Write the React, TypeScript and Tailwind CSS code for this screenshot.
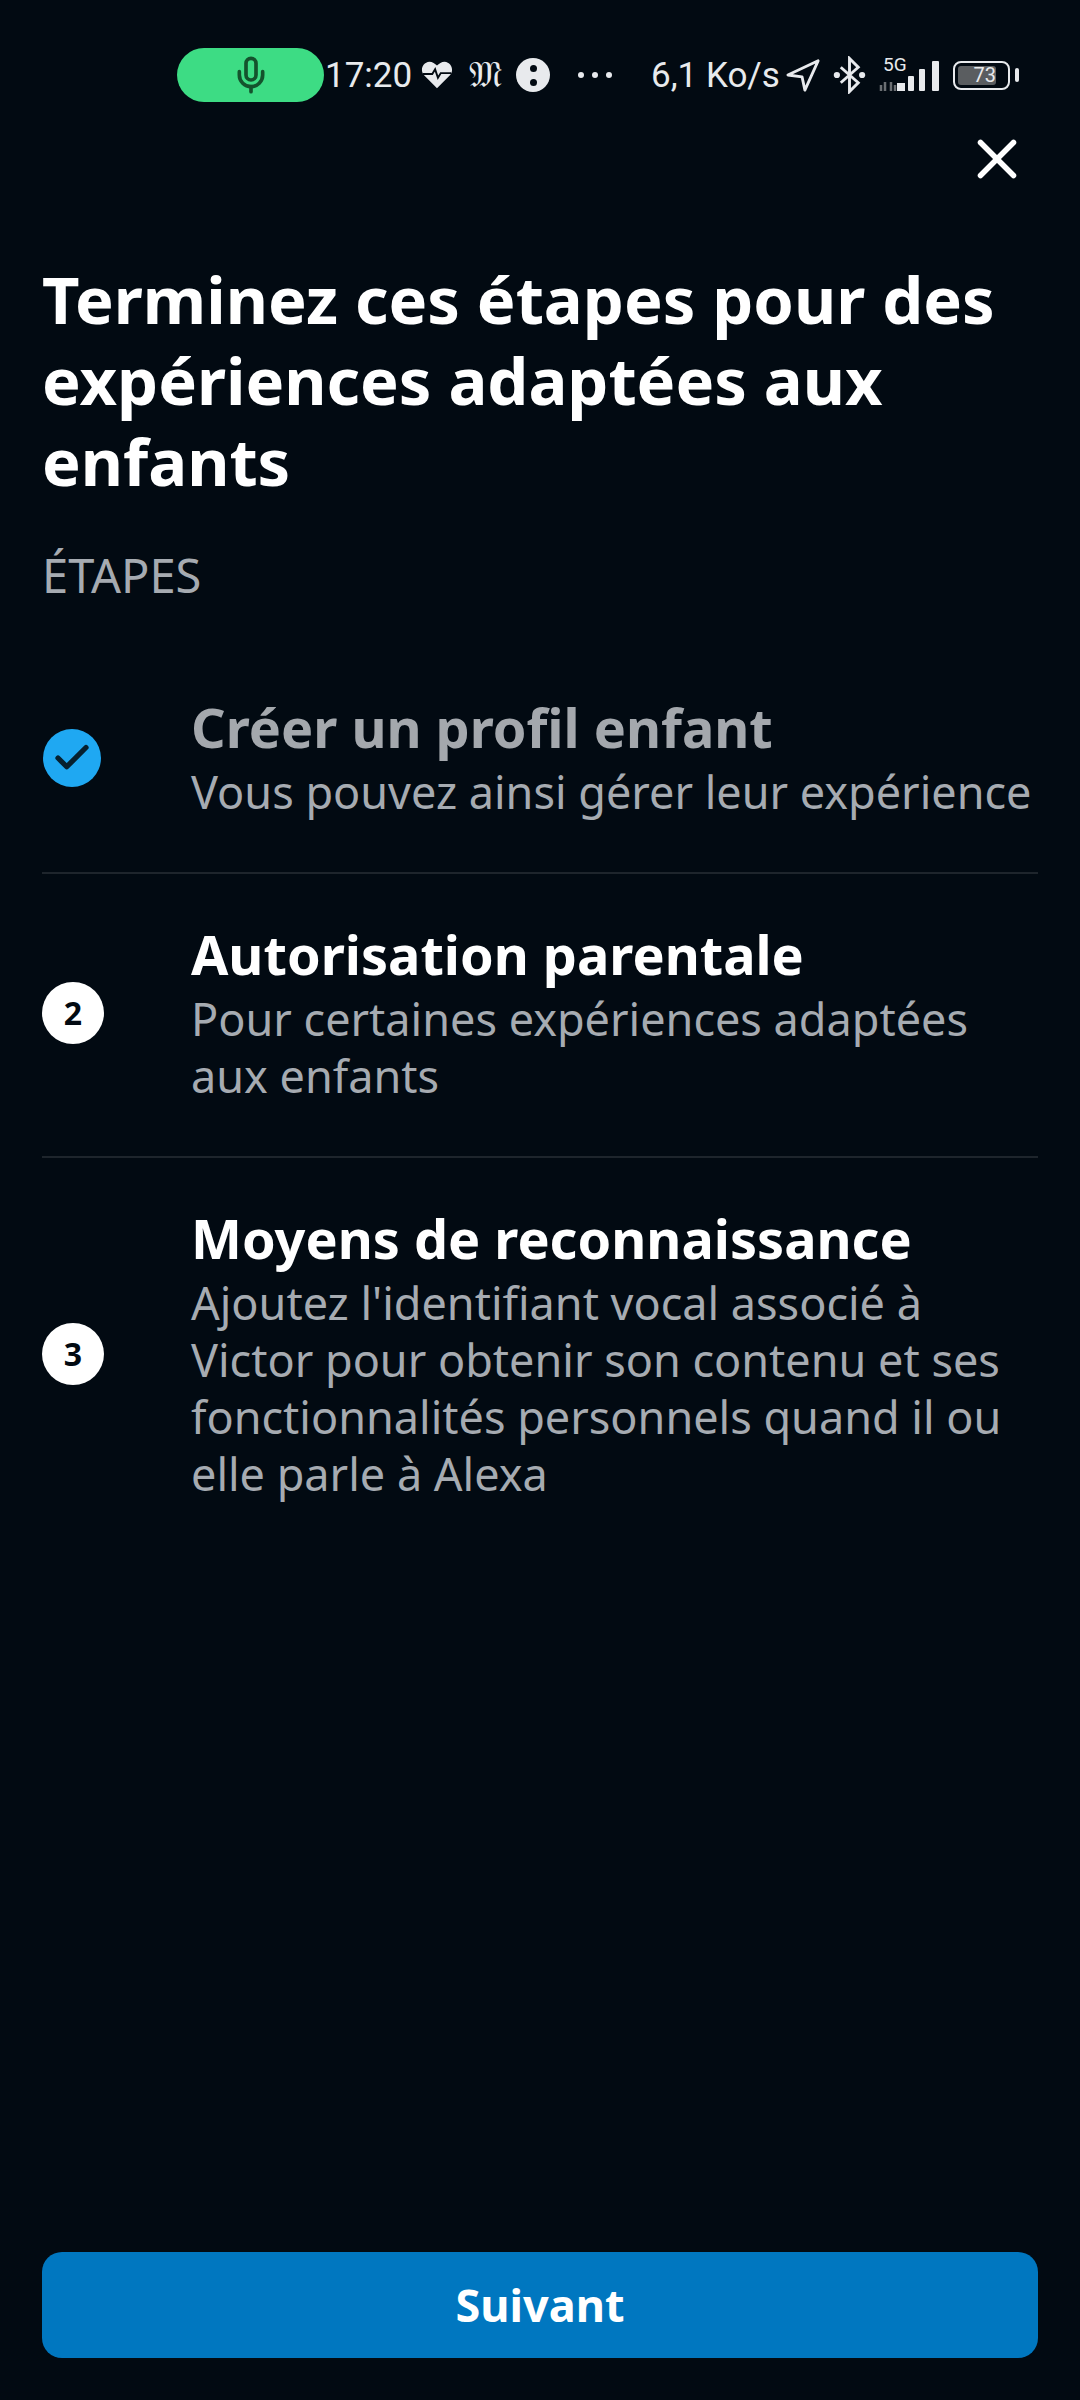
import { Check, Mic, X } from "lucide-react";

const font = "font-['Noto_Sans',sans-serif]";

function StatusBar() {
  return (
    <div className="flex h-[104px] items-center pl-[177px] pt-[46px] text-[#e8eaed] font-['Roboto',sans-serif]">
      <div className="flex h-[54px] w-[147px] items-center justify-center rounded-[27px] bg-[#3ddc84]">
        <Mic className="h-[40px] w-[40px] text-[#14532d]" strokeWidth={2.2} />
      </div>
      <span className="ml-[1px] w-[86px] text-[35px] leading-none">17:20</span>
      {/* heart with pulse */}
      <svg viewBox="0 0 34 30" className="ml-[10px] h-[30px] w-[32px]">
        <path d="M17 29 3 15C-1 10 1 2 9 1c3 0 6 2 8 4 2-2 5-4 8-4 8 1 10 9 6 14Z" fill="#e8eaed" />
        <path d="M2 14h10l3-5 3 9 3-5h11" fill="none" stroke="#020a12" strokeWidth="2" />
      </svg>
      <span className="ml-[19px] flex w-[27px] justify-center font-['Liberation_Serif',serif] text-[36px] leading-none">𝔐</span>
      <div className="ml-[17px] flex h-[34px] w-[34px] flex-col items-center justify-center gap-[7px] rounded-full bg-[#e8eaed]">
        <span className="h-[7px] w-[7px] rounded-full bg-[#020a12]" />
        <span className="h-[7px] w-[7px] rounded-full bg-[#020a12]" />
      </div>
      <div className="ml-[28px] flex gap-[8px]">
        <span className="h-[6px] w-[6px] rounded-full bg-[#e8eaed]" />
        <span className="h-[6px] w-[6px] rounded-full bg-[#e8eaed]" />
        <span className="h-[6px] w-[6px] rounded-full bg-[#e8eaed]" />
      </div>
      <span className="ml-[39px] w-[131px] whitespace-nowrap text-[35px] leading-none">6,1 Ko/s</span>
      <svg viewBox="0 0 36 36" className="ml-[4px] h-[36px] w-[34px]">
        <path d="M2 18 34 3 20 34l-3-14Z" fill="none" stroke="#e8eaed" strokeWidth="3" strokeLinejoin="round" />
      </svg>
      <svg viewBox="0 0 34 38" className="ml-[13px] h-[38px] w-[33px]">
        <path d="m8 11 18 16-9 9V2l9 9L8 27" fill="none" stroke="#e8eaed" strokeWidth="3" />
        <circle cx="4" cy="19" r="3.2" fill="#e8eaed" />
        <circle cx="30" cy="19" r="3.2" fill="#e8eaed" />
      </svg>
      <div className="relative ml-[12px] h-[32px] w-[62px]">
        <svg viewBox="0 0 62 32" className="h-[32px] w-[62px]">
          <path d="M3 26v6M7 23v9M13 23v9M17 26v6" stroke="#6b6f73" strokeWidth="2.5" />
          <rect x="19" y="24" width="8" height="8" fill="#e8eaed" />
          <rect x="30" y="17" width="6" height="15" rx="1" fill="#e8eaed" />
          <rect x="41" y="10" width="6" height="22" rx="1" fill="#e8eaed" />
          <rect x="54" y="2" width="7" height="30" rx="1" fill="#e8eaed" />
        </svg>
        <span className="absolute left-[5px] top-[-4px] text-[19px] leading-none">5G</span>
      </div>
      <div className="ml-[13px] flex items-center">
        <div className="flex h-[29px] w-[57px] rounded-[8px] border-[2px] border-[#e8eaed] p-[3px]">
          <div className="flex h-full w-[38px] items-center justify-end rounded-[3px] bg-[#5a5d60] text-[20px] leading-none">
            73
          </div>
        </div>
        <span className="ml-[5px] h-[14px] w-[4px] rounded-[2px] bg-[#e8eaed]" />
      </div>
    </div>
  );
}

type Step = {
  title: string;
  desc: string[];
  done?: boolean;
  n?: number;
};

const steps: Step[] = [
  { title: "Créer un profil enfant", desc: ["Vous pouvez ainsi gérer leur expérience"], done: true },
  { title: "Autorisation parentale", desc: ["Pour certaines expériences adaptées", "aux enfants"], n: 2 },
  {
    title: "Moyens de reconnaissance",
    desc: [
      "Ajoutez l'identifiant vocal associé à",
      "Victor pour obtenir son contenu et ses",
      "fonctionnalités personnels quand il ou",
      "elle parle à Alexa",
    ],
    n: 3,
  },
];

function StepRow({ step, last }: { step: Step; last: boolean }) {
  return (
    <div className={`flex items-center pt-[44px] pb-[52px] ${last ? "" : "border-b-2 border-[#1e252c]"}`}>
      <div className="mt-[4px] flex w-[149px] shrink-0 items-center">
        {step.done ? (
          <div className="ml-[1px] flex h-[58px] w-[58px] items-center justify-center rounded-full bg-[#1fa8f2]">
            <Check className="h-[42px] w-[42px] text-[#06202f]" strokeWidth={3} />
          </div>
        ) : (
          <div className="flex h-[62px] w-[62px] items-center justify-center rounded-full bg-white text-[32px] font-bold text-[#020a12]">
            {step.n}
          </div>
        )}
      </div>
      <div className="min-w-0">
        <div className={`whitespace-nowrap text-[54px] font-bold leading-[72px] ${step.done ? "text-[#a4a8ad]" : "text-white"}`}>
          {step.title}
        </div>
        {step.desc.map((line) => (
          <div key={line} className="whitespace-nowrap text-[45px] leading-[57px] text-[#a6abb1]">
            {line}
          </div>
        ))}
      </div>
    </div>
  );
}

export default function App() {
  return (
    <div className={`flex h-[2400px] w-[1080px] flex-col bg-[#020a12] ${font}`}>
      <StatusBar />
      <div className="flex justify-end pr-[50px] pt-[22px]">
        <X className="h-[66px] w-[66px] text-white" strokeWidth={2} />
      </div>
      <div className="flex flex-1 flex-col px-[42px]">
        <h1 className="mt-[67px] text-[65px] font-bold leading-[81px] text-white">
          Terminez ces étapes pour des expériences adaptées aux enfants
        </h1>
        <div className="mt-[45px] text-[47px] leading-[57px] text-[#a6abb1]">ÉTAPES</div>
        <div className="mt-[43px] flex flex-col">
          {steps.map((s, i) => (
            <StepRow key={s.title} step={s} last={i === steps.length - 1} />
          ))}
        </div>
        <div className="mt-auto mb-[42px] flex h-[106px] items-center justify-center rounded-[20px] bg-[#0077c0] text-[45px] font-bold text-white">
          Suivant
        </div>
      </div>
    </div>
  );
}
